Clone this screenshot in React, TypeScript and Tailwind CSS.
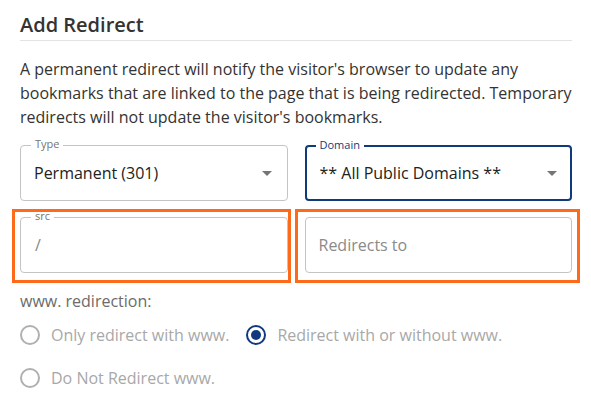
import React, { useState } from 'react';

const SelectBox = ({ label, value, focused }: { label: string; value: string; focused?: boolean }) => (
  <div
    className={`relative h-[56px] rounded-[4px] flex items-center pl-[14px] pr-[14px] ${
      focused ? 'border-2 border-[#0f3b7d]' : 'border border-[#c4c4c4]'
    }`}
  >
    <span
      className={`absolute top-[-9px] px-[4px] bg-white text-[11px] leading-[14px] ${
        focused ? 'left-[9px] text-[#0f3b7d]' : 'left-[10px] text-[#757575]'
      }`}
    >
      {label}
    </span>
    <span className={`flex-1 text-[16px] text-[#222] ${focused ? '-ml-px' : '-ml-px'}`}>{value}</span>
    <svg width="10" height="5" viewBox="0 0 10 5" className={focused ? 'mr-[-1px]' : 'mr-px'}>
      <path d="M0 0 L10 0 L5 5 Z" fill="#757575" />
    </svg>
  </div>
);

const TextBox = ({ label, value, placeholder }: { label?: string; value?: string; placeholder?: string }) => (
  <div className="relative h-[56px] rounded-[4px] border border-[#c4c4c4] flex items-center px-[14px]">
    {label && (
      <span className="absolute top-[-9px] left-[10px] px-[4px] bg-white text-[11px] leading-[14px] text-[#757575]">
        {label}
      </span>
    )}
    {value ? (
      <span className="text-[16px] text-[#888]">{value}</span>
    ) : (
      <span className="text-[16px] text-[#8a8a8a] -ml-px">{placeholder}</span>
    )}
  </div>
);

const Radio = ({ label, checked }: { label: string; checked?: boolean }) => (
  <label className="h-[43px] flex items-center gap-[11px]">
    <span
      className={`w-[20px] h-[20px] rounded-full border-2 flex items-center justify-center ${
        checked ? 'border-[#0f3b7d]' : 'border-[#b0b0b0]'
      }`}
    >
      {checked && <span className="w-[10px] h-[10px] rounded-full bg-[#0f3b7d]" />}
    </span>
    <span className="text-[16px] text-[#a8a8a8]">{label}</span>
  </label>
);

const App = () => {
  const [mode] = useState('both');

  return (
    <div
      className="w-[591px] h-[406px] bg-white px-[20px] pt-[13px] overflow-hidden"
      style={{ fontFamily: '"Open Sans", "Liberation Sans", sans-serif' }}
    >
      <div className="w-[552px]">
        <h2 className="text-[20px] leading-6 font-semibold text-[#333] pb-[3px] border-b border-[#e3e3e3]">
          Add Redirect
        </h2>
        <p className="mt-[16px] text-[16px] leading-6 text-[#333]">
          A permanent redirect will notify the visitor's browser to update any bookmarks that are linked to the page
          that is being redirected. Temporary redirects will not update the visitor's bookmarks.
        </p>

        <div className="mt-[16px] grid grid-cols-2 gap-x-[17px] gap-y-[16px]">
          <SelectBox label="Type" value="Permanent (301)" />
          <SelectBox label="Domain" value="** All Public Domains **" focused />
          <div className="relative">
            <TextBox label="src" value="/" />
            {/* highlight */}
            <div className="absolute top-[-8px] left-[-8px] right-[-3px] bottom-[-10px] border-[3px] border-[#fd6a1a] pointer-events-none" />
          </div>
          <div className="relative">
            <TextBox placeholder="Redirects to" />
            <div className="absolute top-[-8px] left-[-10px] right-[-8px] bottom-[-10px] border-[3px] border-[#fd6a1a] pointer-events-none" />
          </div>
        </div>

        <div className="mt-[16px] text-[16px] leading-6 text-[#6b6b6b]">www. redirection:</div>
        <div className="flex flex-wrap gap-x-[17px]">
          <Radio label="Only redirect with www." checked={mode === 'www'} />
          <Radio label="Redirect with or without www." checked={mode === 'both'} />
          <Radio label="Do Not Redirect www." checked={mode === 'none'} />
        </div>
      </div>
    </div>
  );
};

export default App;
